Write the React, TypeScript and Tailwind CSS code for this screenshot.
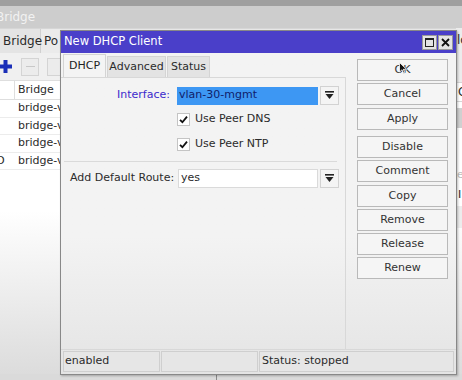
import React from 'react';

const DropBtn: React.FC = () => (
  <div className="w-[19px] h-[19px] flex items-center justify-center bg-[#f4f4f4] border border-[#d2d2d2]">
    <svg width="9" height="9" viewBox="0 0 9 9">
      <rect x="0" y="0" width="9" height="1.6" fill="#222" />
      <path d="M0.5 3 L8.5 3 L4.5 8 Z" fill="#222" />
    </svg>
  </div>
);

const Check: React.FC<{ label: string }> = ({ label }) => (
  <div className="flex items-center h-[13px]">
    <div className="w-[13px] h-[13px] bg-white border border-[#c4c4c4] flex items-center justify-center">
      <svg width="9" height="9" viewBox="0 0 9 9">
        <path d="M1 4.8 L3.4 7.2 L8 1.6" stroke="#111" strokeWidth="1.8" fill="none" />
      </svg>
    </div>
    <span className="ml-[5px]">{label}</span>
  </div>
);

const SideBtn: React.FC<{ label: string; extra?: string }> = ({ label, extra }) => (
  <div
    className={`h-[22px] flex items-center justify-center bg-[#f5f5f5] border border-[#b9b9b9] text-[#333] ${extra ?? ''}`}
  >
    {label}
  </div>
);

const rows = ['bridge-v', 'bridge-v', 'bridge-v', 'bridge-v'];

export default function App() {
  return (
    <div className="relative w-[462px] h-[380px] overflow-hidden bg-[#e6e6e6] font-['DejaVu_Sans',sans-serif] text-[11px] text-[#2b2b2b]">
      {/* window behind */}
      <div className="flex flex-col h-full">
        <div className="h-[6px] bg-[#9f9f9f]" />
        <div className="h-[22px] bg-[#cdcdcd] flex items-center">
          <span className="-ml-[4px] text-[12px] text-[#f2f2f2]">Bridge</span>
        </div>
        <div className="h-[25px] bg-[#ebebeb] flex items-center border-t border-[#d6d6d6]">
          <div className="h-full w-[41px] flex items-center pl-[3px] bg-[#e4e4e4] border-r border-[#d0d0d0] text-[12px]">
            Bridge
          </div>
          <span className="ml-[3px] text-[12px]">Po</span>
        </div>
        <div className="h-[27px] bg-[#f0f0f0] flex items-center">
          <svg width="13" height="13" viewBox="0 0 13 13" className="-ml-[1px]">
            <rect x="4.5" y="0" width="4" height="13" fill="#1b2fb8" />
            <rect x="0" y="4.5" width="13" height="4" fill="#1b2fb8" />
          </svg>
          <div className="ml-[9px] w-[18px] h-[18px] bg-[#ececec] border border-[#d4d4d4] flex items-center justify-center">
            <div className="w-[9px] h-[1px] bg-[#c8c8c8]" />
          </div>
          <div className="ml-[8px] w-[18px] h-[18px] bg-[#ececec] border border-[#d4d4d4]" />
        </div>
        <div className="bg-white">
          <div className="h-[20px] flex items-center border-y border-[#dedede]">
            <div className="w-[15px] h-full border-r border-[#dedede]" />
            <span className="ml-[3px]">Bridge</span>
          </div>
          {rows.map((r, i) => (
            <div key={i} className="h-[17.5px] flex items-center border-b border-[#ececec]">
              <div className="w-[15px] h-full flex items-center -ml-[4px]">{i === 3 ? 'O' : ''}</div>
              <span className="ml-[7px]">{r}</span>
            </div>
          ))}
        </div>
        <div className="flex-1 bg-gradient-to-b from-white from-20% to-[#dcdcdc]" />
        <div className="h-[6px] bg-[#dadada] flex">
          <div className="w-[217px] border-r border-[#8a8a8a]" />
        </div>
      </div>

      {/* window to the right, mostly hidden */}
      <div className="absolute left-[456px] top-[28px] w-[30px] h-[200px] flex flex-col bg-[#ececec]">
        <div className="h-[24px] flex items-center pl-[1px] text-[12px]">lo</div>
        <div className="h-[30px]" />
        <div className="h-[20px] bg-white flex items-center pl-[2px] text-[12px] border-y border-[#d6d6d6]">C</div>
        <div className="h-[6px] bg-white" />
        <div className="h-[20px] bg-[#d0d0d0]" />
        <div className="h-[38px] bg-white" />
        <div className="h-[18px] bg-white flex items-center pl-[1px] text-[#bdbdbd]">er</div>
        <div className="h-[22px] bg-white flex items-center pl-[2px]">I</div>
      </div>

      {/* dialog */}
      <div className="absolute left-[60px] top-[30px] w-[397px] h-[345px] flex flex-col border border-[#888] bg-gradient-to-b from-[#f3f3f3] from-60% to-[#e4e4e4] shadow-[1px_1px_2px_rgba(0,0,0,0.25)]">
        <div className="h-[22px] bg-[#4a3fc9] flex items-center justify-between pl-[3px] pr-[3px]">
          <span className="text-white text-[11.5px]">New DHCP Client</span>
          <div className="flex gap-[1px]">
            <div className="w-[15px] h-[15px] bg-[#e4e4e4] border border-[#9a9a9a] flex items-center justify-center">
              <div className="w-[9px] h-[9px] border border-[#222] border-t-2" />
            </div>
            <div className="w-[15px] h-[15px] bg-[#e4e4e4] border border-[#9a9a9a] flex items-center justify-center">
              <svg width="9" height="9" viewBox="0 0 9 9">
                <path d="M1 1 L8 8 M8 1 L1 8" stroke="#111" strokeWidth="1.8" />
              </svg>
            </div>
          </div>
        </div>

        <div className="flex flex-1">
          {/* left panel */}
          <div className="w-[285px] flex flex-col">
            <div className="h-[24px] flex items-end pl-[2px] gap-[1px]">
              <div className="h-[23px] w-[43px] flex items-center justify-center bg-[#f4f4f4] border-t border-x border-[#d4d4d4] text-[#222]">
                DHCP
              </div>
              <div className="h-[21px] w-[59px] flex items-center justify-center bg-[#e3e3e3] border-t border-x border-[#d4d4d4]">
                Advanced
              </div>
              <div className="h-[21px] w-[43px] flex items-center justify-center bg-[#e3e3e3] border-t border-x border-[#d4d4d4]">
                Status
              </div>
            </div>
            <div className="flex-1 flex flex-col border-r border-b border-t border-[#d8d8d8]">
              <div className="mt-[8px] flex items-center h-[19px]">
                <div className="w-[109px] text-right text-[#3b2bcc]">Interface:</div>
                <div className="ml-[7px] w-[141px] h-[18px] bg-[#3d97f3] flex items-center pl-[2px] text-[#10206a]">
                  vlan-30-mgmt
                </div>
                <div className="ml-[2px]">
                  <DropBtn />
                </div>
              </div>
              <div className="ml-[116px] mt-[8px]">
                <Check label="Use Peer DNS" />
              </div>
              <div className="ml-[116px] mt-[12px]">
                <Check label="Use Peer NTP" />
              </div>
              <div className="mx-[3px] mt-[10px] h-[1px] bg-[#dadada] mr-[8px]" />
              <div className="mt-[7px] flex items-center h-[19px]">
                <div className="w-[117px] pl-[9px] whitespace-nowrap">Add Default Route:</div>
                <div className="w-[140px] h-[19px] bg-white border border-[#dadada] flex items-center pl-[2px]">
                  yes
                </div>
                <div className="ml-[2px]">
                  <DropBtn />
                </div>
              </div>
            </div>
          </div>

          {/* right buttons */}
          <div className="flex-1 flex flex-col">
            <div className="flex-1 flex flex-col pl-[11px] pr-[8px] pt-[6px] gap-[2px] border-b border-[#d8d8d8]">
              <div className="relative">
                <SideBtn label="OK" />
                <svg className="absolute left-[42px] top-[3px]" width="8" height="12" viewBox="0 0 8 12">
                  <path d="M0.5 0.5 L0.5 10 L3 7.8 L4.8 11.5 L6 11 L4.3 7.3 L7.5 7.3 Z" fill="#111" stroke="#fff" strokeWidth="0.8" />
                </svg>
              </div>
              <SideBtn label="Cancel" />
              <SideBtn label="Apply" extra="mt-[1px]" />
              <SideBtn label="Disable" extra="mt-[4px]" />
              <SideBtn label="Comment" />
              <SideBtn label="Copy" extra="mt-[1px]" />
              <SideBtn label="Remove" />
              <SideBtn label="Release" />
              <SideBtn label="Renew" />
            </div>
          </div>
        </div>

        {/* status bar */}
        <div className="h-[24px] flex px-[2px] pb-[2px] pt-[1px] gap-[1px]">
          <div className="w-[97px] bg-[#e6e6e6] border border-[#cfcfcf] flex items-center pl-[1px]">enabled</div>
          <div className="w-[97px] bg-[#e6e6e6] border border-[#cfcfcf]" />
          <div className="flex-1 bg-[#e6e6e6] border border-[#cfcfcf] flex items-center pl-[2px]">Status: stopped</div>
        </div>
      </div>
    </div>
  );
}
